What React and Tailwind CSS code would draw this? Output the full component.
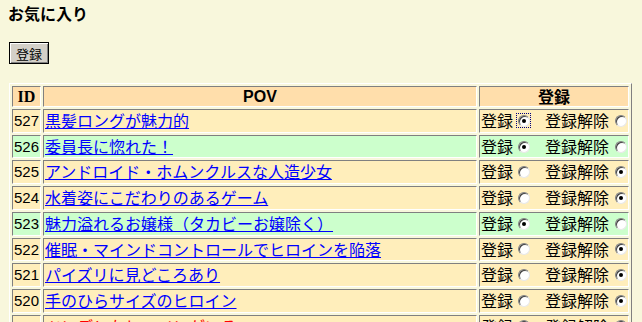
const rows = [
  { id: 527, title: "黒髪ロングが魅力的", on: true, green: false, focus: true },
  { id: 526, title: "委員長に惚れた！", on: true, green: true },
  { id: 525, title: "アンドロイド・ホムンクルスな人造少女", on: false, green: false },
  { id: 524, title: "水着姿にこだわりのあるゲーム", on: false, green: false },
  { id: 523, title: "魅力溢れるお嬢様（タカビーお嬢除く）", on: true, green: true },
  { id: 522, title: "催眠・マインドコントロールでヒロインを陥落", on: false, green: false },
  { id: 521, title: "パイズリに見どころあり", on: false, green: false },
  { id: 520, title: "手のひらサイズのヒロイン", on: false, green: false },
  { id: 519, title: "ツンデレなヒロインがいる", on: false, green: false, visited: true },
];

const jp = "font-['Noto_Sans_CJK_JP','Noto_Sans',sans-serif]";

function Radio({ checked, focus }) {
  return (
    <span
      className={`inline-flex w-[13px] h-[13px] items-center justify-center ${
        focus ? "outline outline-1 outline-dotted outline-[#000080]" : ""
      }`}
    >
      <span className="flex w-[12px] h-[12px] items-center justify-center rounded-full bg-white border border-t-[#808080] border-l-[#808080] border-b-[#e8e8e8] border-r-[#e8e8e8] shadow-[inset_1px_1px_0_#404040]">
        {checked && <span className="w-[4px] h-[4px] rounded-full bg-black" />}
      </span>
    </span>
  );
}

const cell =
  "border border-t-[#808080] border-l-[#808080] border-b-white border-r-white p-[1px]";

export default function App() {
  return (
    <div className={`min-h-screen bg-[#f8f7dc] text-black ${jp}`}>
      <div className="pt-[4px] pl-[8px] text-[16px] leading-[18px] font-bold">お気に入り</div>

      <button className="mt-[20px] ml-[9px] w-[40px] h-[22px] bg-[#d4d0c8] border border-black shadow-[inset_1px_1px_0_#ffffff,inset_-1px_-1px_0_#808080] text-[13px] leading-[13px] flex items-center justify-center">
        登録
      </button>

      <table className="mt-[19px] ml-[9px] w-[623px] table-fixed border-separate border-spacing-[2px] border border-t-white border-l-white border-b-[#808080] border-r-[#808080]">
        <thead>
          <tr className="bg-[#ffdeab]">
            <th className={`${cell} w-[29px] text-[16px] leading-[17px] font-bold font-['Liberation_Serif',serif]`}>ID</th>
            <th className={`${cell} w-[434px] text-[16px] leading-[17px] font-bold font-['Liberation_Sans',sans-serif]`}>POV</th>
            <th className={`${cell} w-[150px] text-[16px] leading-[17px] font-bold`}>登録</th>
          </tr>
        </thead>
        <tbody>
          {rows.map((r) => (
            <tr key={r.id} className={r.green ? "bg-[#ccffcc]" : "bg-[#ffeebb]"}>
              <td className={`${cell} text-[15px] leading-[19.7px] font-['Liberation_Sans',sans-serif]`}>{r.id}</td>
              <td className={`${cell} text-[16px] leading-[19.7px] whitespace-nowrap overflow-hidden`}>
                <a href="#" className={`underline ${r.visited ? "text-[#ff0000]" : "text-[#0000ff]"}`}>
                  {r.title}
                </a>
              </td>
              <td className={`${cell} text-[16px] leading-[19.7px]`}>
                <div className="flex items-center whitespace-nowrap">
                  <span>登録</span>
                  <span className="ml-[4px] flex">
                    <Radio checked={r.on} focus={r.focus} />
                  </span>
                  <span className="ml-[15px]">登録解除</span>
                  <span className="ml-[5px] flex">
                    <Radio checked={!r.on} />
                  </span>
                </div>
              </td>
            </tr>
          ))}
        </tbody>
      </table>
    </div>
  );
}
